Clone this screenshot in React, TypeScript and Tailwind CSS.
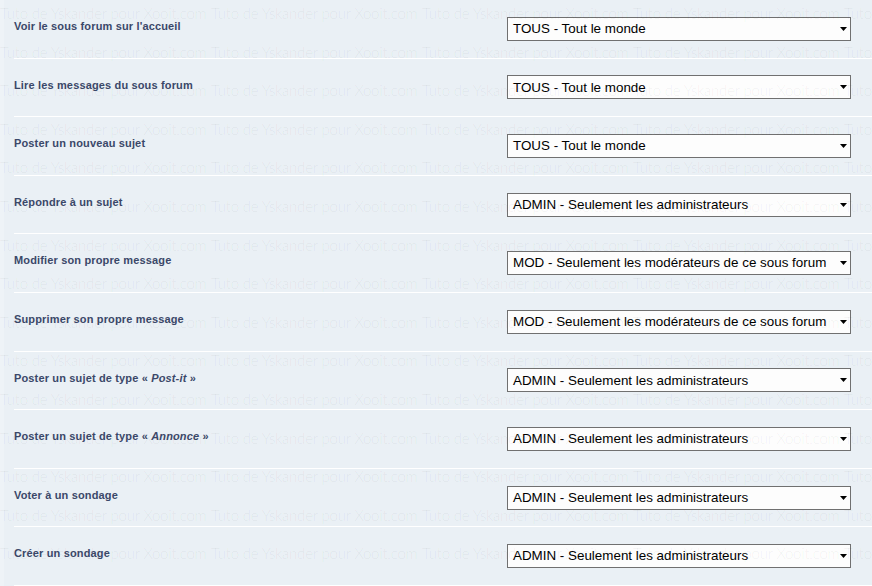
import React from 'react'

const rows: { label: React.ReactNode; value: string }[] = [
  { label: <>Voir le sous forum sur l'accueil</>, value: 'TOUS - Tout le monde' },
  { label: <>Lire les messages du sous forum</>, value: 'TOUS - Tout le monde' },
  { label: <>Poster un nouveau sujet</>, value: 'TOUS - Tout le monde' },
  { label: <>Répondre à un sujet</>, value: 'ADMIN - Seulement les administrateurs' },
  { label: <>Modifier son propre message</>, value: 'MOD - Seulement les modérateurs de ce sous forum' },
  { label: <>Supprimer son propre message</>, value: 'MOD - Seulement les modérateurs de ce sous forum' },
  {
    label: (
      <>
        Poster un sujet de type « <i>Post-it</i> »
      </>
    ),
    value: 'ADMIN - Seulement les administrateurs',
  },
  {
    label: (
      <>
        Poster un sujet de type « <i>Annonce</i> »
      </>
    ),
    value: 'ADMIN - Seulement les administrateurs',
  },
  { label: <>Voter à un sondage</>, value: 'ADMIN - Seulement les administrateurs' },
  { label: <>Créer un sondage</>, value: 'ADMIN - Seulement les administrateurs' },
]

function FakeSelect({ value }: { value: string }) {
  return (
    <div className="flex h-[24px] w-[344px] items-center justify-between border border-[#707070] bg-[#fdfdfd] pl-[5px] pr-[3px]">
      <span className="text-[13.4px] leading-none text-black">{value}</span>
      <svg width="7" height="4" viewBox="0 0 7 4">
        <path d="M0 0h7L3.5 4z" fill="#000" />
      </svg>
    </div>
  )
}

export default function App() {
  const lines = Array.from({ length: 21 })
  const tiles = Array.from({ length: 5 })
  return (
    <div className="relative h-[586px] w-[872px] overflow-hidden bg-[#eef3f7] pl-[4px] font-['Liberation_Sans',Arial,sans-serif]">
      <div className="flex h-full flex-col bg-[#eaf0f5]">
        {rows.map((r, i) => (
          <div key={i} className="ml-[10px] flex flex-1 items-center border-b border-white">
            <div className="mb-[5px] w-[493px] text-[11px] font-bold tracking-[0.15px] text-[#3b4869]">{r.label}</div>
            <FakeSelect value={r.value} />
          </div>
        ))}
      </div>

      {/* watermark overlay */}
      <div
        aria-hidden="true"
        className="pointer-events-none absolute left-0 top-[-1px] font-['Lato',sans-serif] font-light text-[15px] leading-[29.3px] tracking-[-0.2px] text-black/[0.065]"
      >
        {lines.map((_, i) => (
          <div key={i} className="whitespace-nowrap">
            {tiles.map((_, j) => (
              <span key={j} className="inline-block w-[211px] overflow-hidden">
                Tuto de Yskander pour Xooit.com
              </span>
            ))}
          </div>
        ))}
      </div>
    </div>
  )
}
